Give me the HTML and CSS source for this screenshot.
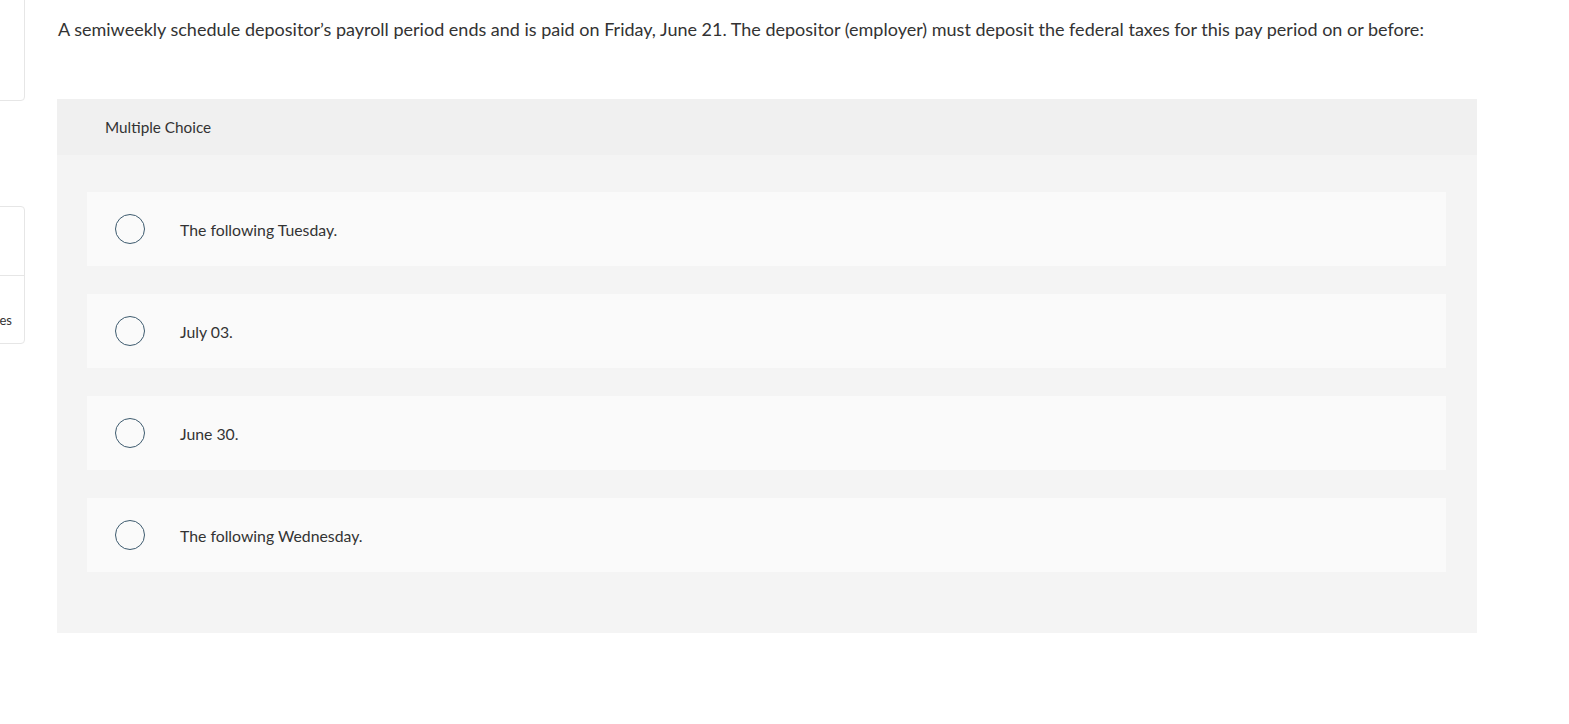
FILE: index.html
```html
<!DOCTYPE html>
<html>
<head>
<meta charset="utf-8">
<link rel="stylesheet" href="styles.css">
</head>
<body>
<div class="page">
  <aside class="side">
    <div class="card card-top"></div>
    <div class="card card-mid">
      <div class="card-row"></div>
      <div class="card-row card-row-label">es</div>
    </div>
  </aside>
  <main class="main">
    <p class="question">A semiweekly schedule depositor’s payroll period ends and is paid on Friday, June 21. The depositor (employer) must deposit the federal taxes for this pay period on or before:</p>
    <section class="panel">
      <div class="panel-head">Multiple Choice</div>
      <div class="panel-body">
        <label class="option"><span class="radio"></span><span class="opt-text">The following Tuesday.</span></label>
        <label class="option"><span class="radio"></span><span class="opt-text">July 03.</span></label>
        <label class="option"><span class="radio"></span><span class="opt-text">June 30.</span></label>
        <label class="option"><span class="radio"></span><span class="opt-text">The following Wednesday.</span></label>
      </div>
    </section>
  </main>
</div>
</body>
</html>
```

FILE: styles.css
```css
html, body {
  margin: 0;
  padding: 0;
  background: #ffffff;
}
body {
  font-family: "Lato", "Open Sans", sans-serif;
  color: #333333;
}
.page {
  display: flex;
  width: 1569px;
  height: 724px;
  overflow: hidden;
}
.side {
  width: 26px;
  flex: none;
  display: flex;
  flex-direction: column;
}
.card {
  margin-left: -60px;
  width: 85px;
  border: 1px solid #e6e6e6;
  border-radius: 4px;
  background: #fff;
  box-sizing: border-box;
}
.card-top {
  margin-top: -10px;
  height: 111px;
}
.card-mid {
  margin-top: 105px;
  height: 138px;
  display: flex;
  flex-direction: column;
}
.card-row {
  height: 68px;
  border-bottom: 1px solid #e6e6e6;
}
.card-row-label {
  border-bottom: none;
  flex: 1;
  display: flex;
  align-items: flex-end;
  justify-content: flex-end;
  padding: 0 12px 15px 0;
  font-size: 13px;
  color: #333;
}
.main {
  margin-left: 31px;
  width: 1420px;
  flex: none;
}
.question {
  margin: 17px 0 0 1px;
  font-size: 18px;
  line-height: 24px;
  color: #333333;
  white-space: nowrap;
}
.panel {
  margin-top: 58px;
  background: #f4f4f4;
}
.panel-head {
  height: 56px;
  background: #f0f0f0;
  display: flex;
  align-items: center;
  padding-left: 48px;
  font-size: 15.3px;
  color: #333;
}
.panel-body {
  padding: 37px 31px 61px 30px;
  display: flex;
  flex-direction: column;
  gap: 28px;
}
.option {
  height: 74px;
  background: #fafafa;
  display: flex;
  align-items: center;
  padding-left: 28px;
  font-size: 15.8px;
  color: #333;
}
.radio {
  width: 28px;
  height: 28px;
  border: 1.5px solid #3d5a6e;
  border-radius: 50%;
  flex: none;
}
.opt-text {
  margin-left: 35px;
}
```
